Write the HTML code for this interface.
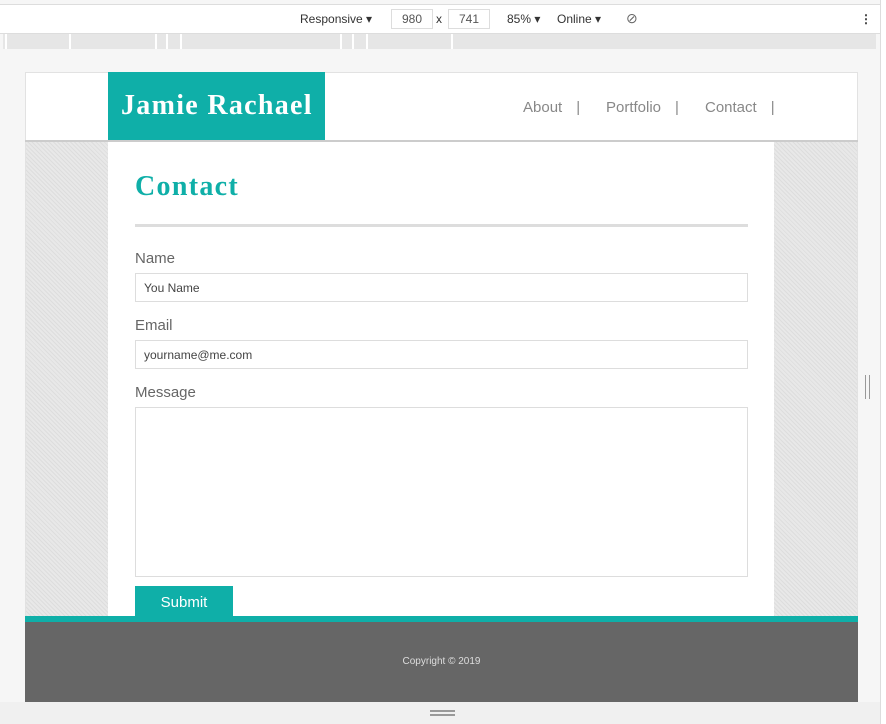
<!DOCTYPE html><html><head><style>
*{margin:0;padding:0;box-sizing:border-box}
body{width:886px;height:724px;background:#f6f6f6;font-family:"Liberation Sans",sans-serif;position:relative;overflow:hidden}
.a{position:absolute}
.tb{left:0;top:4px;width:880px;height:30px;background:#fff;border-top:1px solid #ddd;border-bottom:1px solid #ddd;font-size:12px;color:#333}
.tb span{position:absolute;top:7px}
.inp{border:1px solid #ddd;height:20px;top:4px!important;padding:2px 0;text-align:center;color:#555}
.ruler{left:3px;top:34px;width:873px;height:15px;background:#e6e6e6}
.ruler i{position:absolute;top:0;width:2px;height:15px;background:#fff}
.frame{left:25px;top:72px;width:833px;height:630px;background:#fff;border:1px solid #e2e2e2}
.tex{background:#e3e3e3;background-image:repeating-linear-gradient(45deg,#ddd 0 1px,#e8e8e8 1px 3px)}
label{position:absolute;left:135px;font-size:15px;color:#666}
.f{position:absolute;left:135px;width:613px;border:1px solid #ddd;background:#fff;font-size:12px;color:#444;padding-left:8px;line-height:28px}
</style></head><body>
<div class="a tb">
<span style="left:300px">Responsive ▾</span>
<span class="inp" style="left:391px;width:42px">980</span>
<span style="left:436px">x</span>
<span class="inp" style="left:448px;width:42px">741</span>
<span style="left:507px">85% ▾</span>
<span style="left:557px">Online ▾</span>
<span style="left:626px;font-size:14px;top:5px;color:#666">⊘</span>
<span style="left:860px;font-weight:bold">⋮</span>
</div>
<div class="a ruler"><i style="left:2px"></i><i style="left:66px"></i><i style="left:152px"></i><i style="left:163px"></i><i style="left:177px"></i><i style="left:337px"></i><i style="left:349px"></i><i style="left:363px"></i><i style="left:448px"></i></div>
<div class="a" style="left:880px;top:0;width:6px;height:724px;background:#fff;border-left:1px solid #ddd"></div>
<div class="a frame"></div>
<div class="a" style="left:25px;top:140px;width:833px;height:2px;background:#ccc"></div>
<div class="a" style="left:108px;top:72px;width:217px;height:68px;background:#0fafa8;color:#fff;font-family:'Liberation Serif',serif;font-weight:bold;font-size:28px;letter-spacing:1.3px;padding:18px 0 0 13px;white-space:nowrap">Jamie Rachael</div>
<div class="a" style="left:523px;top:99px;font-size:15px;color:#888;word-spacing:0">About<span style="margin:0 0 0 14px">|</span></div>
<div class="a" style="left:606px;top:99px;font-size:15px;color:#888">Portfolio<span style="margin-left:14px">|</span></div>
<div class="a" style="left:705px;top:99px;font-size:15px;color:#888">Contact<span style="margin-left:14px">|</span></div>
<div class="a tex" style="left:26px;top:142px;width:82px;height:474px"></div>
<div class="a tex" style="left:774px;top:142px;width:83px;height:474px"></div>
<div class="a" style="left:108px;top:142px;width:666px;height:474px;background:#fff"></div>
<div class="a" style="left:135px;top:171px;font-family:'Liberation Serif',serif;font-weight:bold;font-size:28px;letter-spacing:1.3px;color:#0fafa8">Contact</div>
<div class="a" style="left:135px;top:224px;width:613px;height:3px;background:#ddd"></div>
<label style="top:250px">Name</label><div class="f" style="top:273px;height:29px">You Name</div>
<label style="top:317px">Email</label><div class="f" style="top:340px;height:29px">yourname@me.com</div>
<label style="top:384px">Message</label><div class="f" style="top:407px;height:170px"></div>
<div class="a" style="left:135px;top:586px;width:98px;height:30px;background:#0fafa8;color:#fff;font-size:15px;text-align:center;line-height:33px">Submit</div>
<div class="a" style="left:25px;top:616px;width:833px;height:6px;background:#0fafa8"></div>
<div class="a" style="left:25px;top:622px;width:833px;height:80px;background:#666;color:#ddd;font-size:10px;text-align:center;line-height:80px">Copyright © 2019</div>
<div class="a" style="left:0;top:702px;width:880px;height:22px;background:#f0f0f0"></div>
<div class="a" style="left:430px;top:710px;width:25px;height:2px;background:#999;box-shadow:0 4px 0 #999"></div>
<div class="a" style="left:865px;top:375px;width:5px;height:24px;border-left:1px solid #999;border-right:1px solid #999"></div>
</body></html>
